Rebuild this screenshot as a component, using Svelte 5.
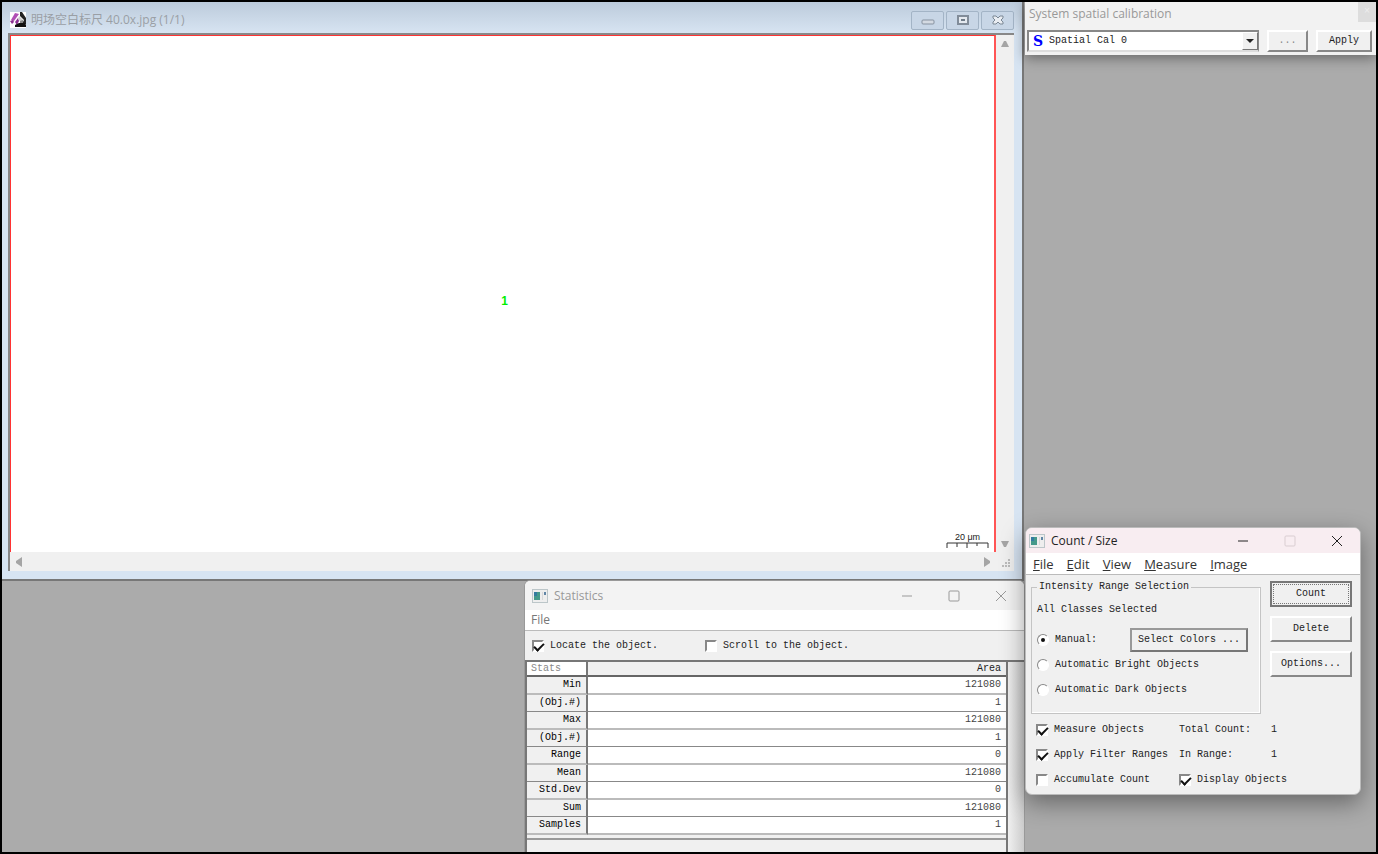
<script lang="ts">
	let calibration = "Spatial Cal 0";
	let mode = "manual";
	let locate = true;
	let scroll = false;
	let measure = true;
	let applyFilter = true;
	let accumulate = false;
	let display = true;

	const menus = ["File", "Edit", "View", "Measure", "Image"];
	const stats = [
		["Min", "121080"],
		["(Obj.#)", "1"],
		["Max", "121080"],
		["(Obj.#)", "1"],
		["Range", "0"],
		["Mean", "121080"],
		["Std.Dev", "0"],
		["Sum", "121080"],
		["Samples", "1"]
	];
</script>

<main class="desktop">
	<section class="image-window">
		<header class="image-title">
			<svg class="app-icon" viewBox="0 0 16 16" width="16" height="16">
				<rect width="16" height="16" fill="#fff" />
				<path d="M5 1l4 1-5 7-3-1z" fill="#b04fb5" />
				<path d="M0 9l3-1 1 2-2 2zM5 10l3-4 1 3-2 4z" fill="#8a3090" />
				<path d="M10 0h2l4 6v6h-4l2-4-4-4z" fill="#222" />
				<path d="M9 4l4 4-2 2-3-3z" fill="#ccc" />
				<path d="M5 13l4-2h6l1 2v2H5z" fill="#111" />
				<path d="M10 9l3-1v3h-3z" fill="#888" />
			</svg>
			<h2>明场空白标尺 40.0x.jpg (1/1)</h2>
			<div class="aero-buttons">
				<button aria-label="Minimize">
					<svg viewBox="0 0 16 12" width="16" height="12"><rect x="2" y="6" width="12" height="4" rx="1" fill="#d4dae2" stroke="#8792a0" /></svg>
				</button>
				<button aria-label="Restore">
					<svg viewBox="0 0 16 12" width="16" height="12"><rect x="3" y="2" width="10" height="8" fill="#e4e9ef" stroke="#818c99" stroke-width="2" /><rect x="6" y="5" width="4" height="2" fill="#6f7b88" /></svg>
				</button>
				<button aria-label="Close">
					<svg viewBox="0 0 16 12" width="16" height="12"><path d="M3 2h3l2 2 2-2h3v2l-2 2 2 2v2h-3L8 8l-2 2H3V8l2-2-2-2z" fill="#e9edf2" stroke="#7b8794" /></svg>
				</button>
			</div>
		</header>
		<div class="viewport">
			<div class="picture">
				<span class="object-label">1</span>
				<div class="scale-bar">
					<span>20 μm</span>
					<svg viewBox="0 0 43 6" width="43" height="6"><path d="M1 6V1h41v5M11 1v4M21 1v5M31 1v3" fill="none" stroke="#333" /></svg>
				</div>
			</div>
			<div class="scroll-v">
				<svg viewBox="0 0 8 8" width="8" height="8"><path d="M3 1h2l3 6H0z" fill="#a5a5a5" /></svg>
				<svg viewBox="0 0 8 8" width="8" height="8"><path d="M0 1h8L5 7H3z" fill="#a5a5a5" /></svg>
			</div>
			<div class="scroll-h">
				<svg viewBox="0 0 8 10" width="8" height="10"><path d="M7 0v10L1 6V4z" fill="#a5a5a5" /></svg>
				<svg viewBox="0 0 8 10" width="8" height="10"><path d="M1 0v10l6-4V4z" fill="#a5a5a5" /></svg>
			</div>
			<div class="grip">
				<svg viewBox="0 0 9 9" width="9" height="9"><path d="M6 0h2v2H6zM3 3h2v2H3zM6 3h2v2H6zM0 6h2v2H0zM3 6h2v2H3zM6 6h2v2H6z" fill="#bbb" /></svg>
			</div>
		</div>
	</section>

	<section class="calibration">
		<header>
			<h2>System spatial calibration</h2>
			<button class="small-close" aria-label="Close">×</button>
		</header>
		<div class="calibration-row">
			<div class="combo">
				<span class="combo-icon">S</span>
				<select aria-label="Spatial calibration" bind:value={calibration}>
					<option>Spatial Cal 0</option>
				</select>
				<span class="combo-arrow">
					<svg viewBox="0 0 8 4" width="8" height="4"><path d="M0 0h8L4 4z" fill="#222" /></svg>
				</span>
			</div>
			<button class="classic more">...</button>
			<button class="classic apply">Apply</button>
		</div>
	</section>

	<section class="stats-window">
		<header class="titlebar">
			<svg class="win-icon" viewBox="0 0 16 14" width="16" height="14">
				<rect x="0.5" y="0.5" width="15" height="13" fill="#eee" stroke="#bcc6c9" />
				<rect x="2" y="3" width="6" height="8" fill="#44998a" />
				<rect x="2" y="3" width="3" height="4" fill="#347ba0" />
				<path d="M10 3h1v8h-1z" fill="#d8d8d8" /><path d="M12 3h2v3h-2z" fill="#6185a5" />
			</svg>
			<h2>Statistics</h2>
			<div class="win-buttons">
				<button aria-label="Minimize"><svg viewBox="0 0 12 12" width="12" height="12"><path d="M1 6h10" /></svg></button>
				<button aria-label="Maximize"><svg viewBox="0 0 12 12" width="12" height="12"><rect x="1" y="1" width="10" height="10" rx="1" /></svg></button>
				<button aria-label="Close"><svg viewBox="0 0 12 12" width="12" height="12"><path d="M1 1l10 10M11 1L1 11" /></svg></button>
			</div>
		</header>
		<nav class="stats-menu"><button>File</button></nav>
		<div class="stats-options">
			<label><input type="checkbox" bind:checked={locate} />Locate the object.</label>
			<label><input type="checkbox" bind:checked={scroll} />Scroll to the object.</label>
		</div>
		<div class="sheet">
			<div class="sheet-main">
				<table>
					<thead>
						<tr><th class="corner">Stats</th><th>Area</th></tr>
					</thead>
					<tbody>
						{#each stats as [name, value]}
							<tr><th>{name}</th><td>{value}</td></tr>
						{/each}
					</tbody>
				</table>
			</div>
			<div class="sheet-side"></div>
		</div>
	</section>

	<section class="count-window">
		<header class="titlebar">
			<svg class="win-icon" viewBox="0 0 16 14" width="16" height="14">
				<rect x="0.5" y="0.5" width="15" height="13" fill="#eee" stroke="#bcc6c9" />
				<rect x="2" y="3" width="6" height="8" fill="#44998a" />
				<rect x="2" y="3" width="3" height="4" fill="#347ba0" />
				<path d="M10 3h1v8h-1z" fill="#d8d8d8" /><path d="M12 3h2v3h-2z" fill="#6185a5" />
			</svg>
			<h2>Count / Size</h2>
			<div class="win-buttons">
				<button aria-label="Minimize"><svg viewBox="0 0 12 12" width="12" height="12"><path d="M1 6h10" /></svg></button>
				<button aria-label="Maximize" disabled><svg viewBox="0 0 12 12" width="12" height="12"><rect x="1" y="1" width="10" height="10" rx="1" /></svg></button>
				<button aria-label="Close"><svg viewBox="0 0 12 12" width="12" height="12"><path d="M1 1l10 10M11 1L1 11" /></svg></button>
			</div>
		</header>
		<nav class="count-menu">
			{#each menus as menu}
				<button><u>{menu[0]}</u>{menu.slice(1)}</button>
			{/each}
		</nav>
		<div class="count-body">
			<div class="count-top">
				<fieldset>
					<legend>Intensity Range Selection</legend>
					<p>All Classes Selected</p>
					<div class="manual">
						<label><input type="radio" value="manual" bind:group={mode} />Manual:</label>
						<button class="classic colors">Select Colors ...</button>
					</div>
					<label><input type="radio" value="bright" bind:group={mode} />Automatic Bright Objects</label>
					<label><input type="radio" value="dark" bind:group={mode} />Automatic Dark Objects</label>
				</fieldset>
				<div class="actions">
					<button class="classic default"><span>Count</span></button>
					<button class="classic">Delete</button>
					<button class="classic">Options...</button>
				</div>
			</div>
			<div class="checks">
				<label><input type="checkbox" bind:checked={measure} />Measure Objects</label>
				<span>Total Count:</span><output>1</output>
				<label><input type="checkbox" bind:checked={applyFilter} />Apply Filter Ranges</label>
				<span>In Range:</span><output>1</output>
				<label><input type="checkbox" bind:checked={accumulate} />Accumulate Count</label>
				<label class="wide"><input type="checkbox" bind:checked={display} />Display Objects</label>
			</div>
		</div>
	</section>
</main>

<style>
	:global(body) {
		margin: 0;
	}

	* {
		box-sizing: border-box;
	}

	.desktop {
		position: relative;
		height: 100vh;
		min-height: 640px;
		overflow: hidden;
		border: 2px solid #000;
		background: #ababab;
		color: #222;
		font: 10px/14px "Liberation Mono", monospace;
	}

	section {
		position: absolute;
		display: flex;
		flex-direction: column;
	}

	h2, p {
		margin: 0;
		font-weight: normal;
	}

	h2 {
		font: 12px/16px "Open Sans", "Noto Sans CJK SC", sans-serif;
	}

	button {
		display: flex;
		align-items: center;
		justify-content: center;
		margin: 0;
		padding: 0;
		border: none;
		background: none;
		color: inherit;
		font: inherit;
	}

	svg {
		display: block;
		flex: none;
	}

	/* image document */
	.image-window {
		inset: 0 352px 271px 0;
		padding: 0 8px 8px 6px;
		border-right: 2px solid #777;
		border-bottom: 2px solid #777;
		background: #d7e4f2;
	}

	.image-title {
		display: flex;
		align-items: center;
		height: 31px;
		margin: 0 -8px 0 -6px;
		padding: 5px 8px 0 8px;
		background: linear-gradient(#bccbdb, #d7e4f2);
	}

	.image-title h2 {
		margin-left: 5px;
		color: #9a9fa5;
	}

	.aero-buttons {
		display: flex;
		gap: 2px;
		margin-left: auto;
	}

	.aero-buttons button {
		width: 33px;
		height: 19px;
		border: 1px solid #a3b4c6;
		border-radius: 2px;
		background: #c8d6e6;
	}

	.viewport {
		flex: 1;
		display: grid;
		grid-template: 1fr 19px / 1fr 18px;
		min-height: 0;
		border: 2px solid #888;
		border-width: 2px 0 0 2px;
		background: #f0f0f0;
	}

	.picture {
		position: relative;
		display: flex;
		align-items: center;
		justify-content: center;
		padding: 13px 0 0 4px;
		border: 1px solid #f33;
		border-width: 1px 2px 0 1px;
		border-right-color: #f55;
		background: #fff;
	}

	.object-label {
		color: #0e0;
		font: bold 12px/14px "Liberation Sans", sans-serif;
	}

	.scale-bar {
		position: absolute;
		right: 5px;
		bottom: 4px;
		font: 9px/9px "Liberation Sans", sans-serif;
		text-align: center;
	}

	.scroll-v {
		display: flex;
		flex-direction: column;
		align-items: center;
		justify-content: space-between;
		padding: 5px 0 4px;
	}

	.scroll-h {
		display: flex;
		align-items: center;
		justify-content: space-between;
		padding: 0 5px;
	}

	.grip {
		display: flex;
		align-items: end;
		justify-content: end;
		padding: 3px;
	}

	/* calibration toolbar */
	.calibration {
		top: 0;
		right: 0;
		width: 351px;
		padding-bottom: 3px;
		background: #f2f2f2;
		box-shadow: 0 3px 12px rgba(0, 0, 0, 0.4);
	}

	.calibration header {
		display: flex;
		justify-content: space-between;
		height: 28px;
		padding-left: 4px;
		color: #999;
	}

	.calibration h2 {
		padding-top: 4px;
	}

	.small-close {
		width: 18px;
		height: 20px;
		background: #ddd;
		color: #eee;
	}

	.calibration-row {
		display: flex;
		align-items: center;
		gap: 8px;
		padding: 0 4px 0 2px;
	}

	.combo {
		flex: 1;
		display: flex;
		align-items: center;
		height: 22px;
		border: 2px solid #888;
		border-right-width: 1px;
		border-bottom-color: #ddd;
		background: #fff;
	}

	.combo-icon {
		width: 16px;
		padding-left: 4px;
		color: #00f;
		font: bold 14px/16px "DejaVu Serif", serif;
	}

	.combo select {
		flex: 1;
		min-width: 0;
		margin-right: -16px;
		padding: 0 0 0 4px;
		border: none;
		background: none;
		color: inherit;
		font: inherit;
		appearance: none;
	}

	.combo-arrow {
		display: flex;
		align-items: center;
		justify-content: center;
		width: 16px;
		height: 18px;
		border: 1px solid #fff;
		border-color: #fff #777 #777 #fff;
		background: #f0f0f0;
		pointer-events: none;
	}

	.classic {
		border: 2px solid #888;
		border-color: #fff #888 #888 #fff;
		background: #f0f0f0;
	}

	.calibration .classic {
		height: 22px;
	}

	.more {
		width: 41px;
		color: #888;
	}

	.apply {
		width: 56px;
	}

	/* shared window chrome */
	.titlebar {
		display: flex;
		align-items: center;
	}

	.titlebar h2 {
		margin-left: 6px;
	}

	.win-buttons {
		display: flex;
		margin-left: auto;
	}

	.win-buttons button {
		width: 47px;
		height: 24px;
	}

	.win-buttons svg {
		fill: none;
		stroke: currentColor;
	}

	.win-buttons button:disabled {
		color: #d9cdd1;
	}

	label {
		display: flex;
		align-items: center;
		white-space: pre;
	}

	input {
		flex: none;
		width: 12px;
		height: 12px;
		margin: 0 6px 0 0;
		border: 2px solid #888;
		border-color: #888 #fff #fff #888;
		background: #fff;
		appearance: none;
	}

	input[type="checkbox"]:checked::before {
		content: "";
		display: block;
		width: 8px;
		height: 4px;
		border: 2px solid #111;
		border-width: 0 0 2px 2px;
		transform: translateY(1px) rotate(-45deg);
	}

	input[type="radio"] {
		border-width: 1px;
		border-radius: 50%;
	}

	input[type="radio"]:checked::before {
		content: "";
		display: block;
		width: 4px;
		height: 4px;
		margin: 3px;
		border-radius: 50%;
		background: #111;
	}

	/* statistics */
	.stats-window {
		inset: 578px 351px 0 522px;
		overflow: hidden;
		border: 1px solid #999;
		border-width: 1px 1px 0;
		border-radius: 6px 6px 0 0;
		background: #f0f0f0;
	}

	.stats-window .titlebar {
		height: 29px;
		padding-left: 7px;
		background: #f3f3f3;
		color: #999;
	}

	.stats-menu {
		display: flex;
		height: 21px;
		padding-left: 6px;
		border-bottom: 1px solid #bbb;
		background: #fff;
		color: #777;
		font: 12px/18px "Open Sans", sans-serif;
	}

	.stats-options {
		display: flex;
		gap: 47px;
		height: 29px;
		padding-left: 7px;
	}

	.sheet {
		flex: 1;
		display: flex;
		border: 2px solid #777;
		border-width: 2px 0 0 2px;
	}

	.sheet-main {
		flex: 1;
		border-right: 2px solid #777;
	}

	.sheet-side {
		width: 16px;
		background: linear-gradient(90deg, #f0f0f0, #ccc);
	}

	table {
		width: 100%;
		border-collapse: separate;
		border-spacing: 0;
		border-bottom: 2px solid #999;
		padding-bottom: 3px;
	}

	th, td {
		height: 18px;
		padding: 0 5px 0 0;
		border-bottom: 2px solid #bbb;
		font-weight: normal;
		line-height: 14px;
		text-align: right;
	}

	th {
		background: #f0f0f0;
	}

	td {
		background: #fff;
		color: #444;
	}

	tbody th {
		color: #000;
	}

	tr th:first-child {
		width: 61px;
		border-right: 2px solid #777;
	}

	thead th {
		height: 15px;
		line-height: 13px;
		border-bottom: 2px solid #666;
	}

	.corner {
		padding-left: 4px;
		background: #fff;
		color: #888;
		text-align: left;
	}

	tbody tr:nth-child(even) th,
	tbody tr:nth-child(even) td {
		height: 17px;
		border-bottom-width: 1px;
		border-bottom-color: #888;
	}

	/* count / size */
	.count-window {
		right: 15px;
		bottom: 57px;
		width: 336px;
		height: 268px;
		overflow: hidden;
		border: 1px solid #bbb;
		border-radius: 7px;
		background: #f0f0f0;
		box-shadow: 0 8px 24px rgba(0, 0, 0, 0.4);
	}

	.count-window .titlebar {
		height: 25px;
		padding-left: 3px;
		background: #f8edf1;
	}

	.count-menu {
		display: flex;
		gap: 13px;
		height: 22px;
		padding-left: 7px;
		border-bottom: 1px solid #bbb;
		background: #fff;
		color: #333;
		font: 13px/18px "Open Sans", sans-serif;
	}

	.count-body {
		padding: 5px 8px 0 5px;
	}

	.count-top {
		display: flex;
		gap: 9px;
	}

	fieldset {
		flex: 1;
		display: flex;
		flex-direction: column;
		gap: 11px;
		min-width: 0;
		height: 134px;
		margin: 0;
		padding: 9px 5px;
		border: 1px solid #c4c4c4;
		box-shadow: inset -1px -1px #fff;
	}

	legend {
		padding: 0 2px;
	}

	.manual {
		display: flex;
		align-items: center;
		justify-content: space-between;
		height: 24px;
		margin-bottom: -5px;
	}

	.colors {
		width: 118px;
		height: 24px;
		margin-right: 7px;
		border-color: #999 #777 #777 #999;
	}

	.actions {
		display: flex;
		flex-direction: column;
		gap: 9px;
		padding-top: 1px;
	}

	.actions button {
		width: 82px;
		height: 26px;
	}

	.actions .default {
		padding: 1px;
		border-color: #777;
	}

	.default span {
		flex: 1;
		border: 1px dotted #777;
		line-height: 18px;
	}

	.checks {
		display: grid;
		grid-template-columns: 143px 92px 1fr;
		row-gap: 11px;
		padding: 9px 0 0 5px;
	}

	.wide {
		grid-column: span 2;
	}
</style>
